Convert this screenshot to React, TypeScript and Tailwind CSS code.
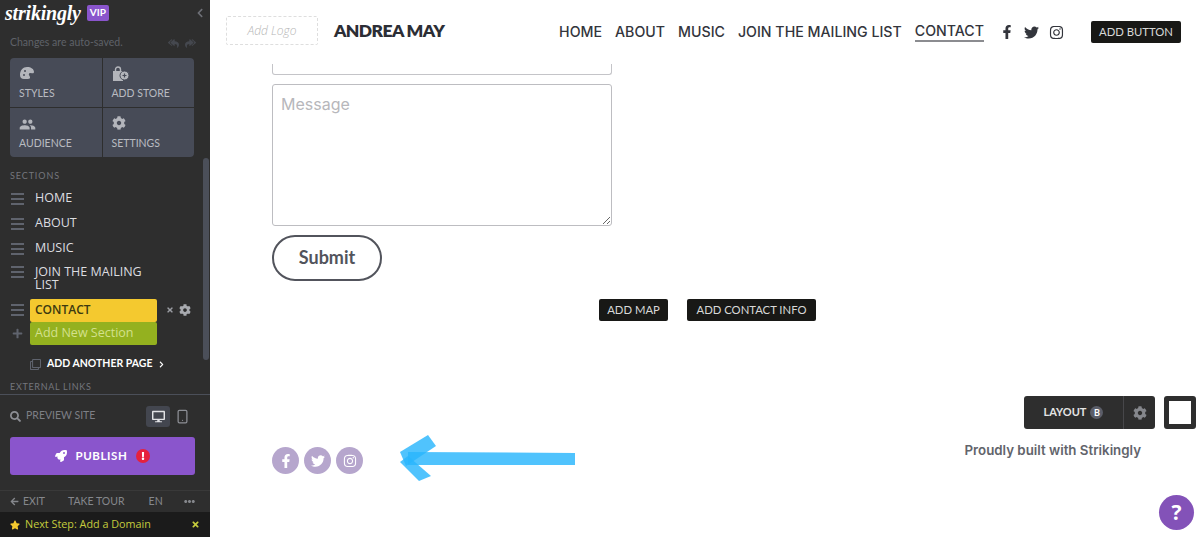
import React from "react";
import { FaFacebookF, FaTwitter, FaInstagram, FaCog, FaSearch, FaRocket, FaStar, FaArrowLeft, FaReplyAll, FaRegClone, FaChevronRight, FaChevronLeft, FaExclamation, FaEllipsisH, FaPlus, FaDesktop, FaTimes } from "react-icons/fa";
import { MdPeople } from "react-icons/md";
import { Smartphone } from "lucide-react";

const lato = "font-['Lato','Liberation_Sans',sans-serif]";
const open = "font-['Open_Sans','Liberation_Sans',sans-serif]";
const inter = "font-['Inter','Liberation_Sans',sans-serif]";

function Burger() {
  return (
    <span className="flex w-[13px] shrink-0 flex-col gap-[3px]">
      <span className="h-[2px] bg-[#5f636d]" />
      <span className="h-[2px] bg-[#5f636d]" />
      <span className="h-[2px] bg-[#5f636d]" />
    </span>
  );
}

function Row({ label }: { label: string }) {
  return (
    <div className="flex h-[25px] items-center gap-[11px] pl-[11px]">
      <Burger />
      <span className={`${open} text-[12.5px] text-[#dcdde0]`}>{label}</span>
    </div>
  );
}

function PaletteIcon() {
  return (
    <svg width="16" height="14" viewBox="0 0 16 14" fill="currentColor" aria-hidden="true">
      <path d="M1 9C1 4 4 1 8 1c4 0 7 2 7 5 0 1-1 1.500-2 1.200L11 7c-1 0-1.500 1-1 2l1 2c.4 1-.5 2-2 2H5C2.500 13 1 11.500 1 9z" />
      <circle cx="5" cy="9" r="1" fill="#474b57" />
      <circle cx="6" cy="5" r="1" fill="#474b57" />
    </svg>
  );
}

function StoreIcon() {
  return (
    <svg width="17" height="16" viewBox="0 0 17 16" fill="currentColor" aria-hidden="true">
      <path d="M1 5h10v10H1z" />
      <path d="M3.500 6V3.500a2.500 2.500 0 0 1 5 0V6" fill="none" stroke="currentColor" strokeWidth="1.400" />
      <circle cx="12.500" cy="9.500" r="4.500" stroke="#474b57" strokeWidth="1" />
      <path d="M12.500 7.500v4M10.500 9.500h4" stroke="#474b57" strokeWidth="1.200" />
    </svg>
  );
}

function Tile({ icon, label }: { icon: React.ReactNode; label: string }) {
  return (
    <div className="flex h-[49px] flex-col justify-between bg-[#474b57] pb-[7px] pl-[9px] pt-[8px]">
      <span className="text-[#b3b5bb]">{icon}</span>
      <span className={`${lato} text-[10.5px] leading-[13px] text-[#b9bbc1]`}>{label}</span>
    </div>
  );
}

function Sidebar() {
  return (
    <aside className="relative flex h-[537px] w-[210px] shrink-0 flex-col overflow-hidden bg-[#2e2e2e]">
      <div className="absolute right-[1px] top-[158px] h-[202px] w-[6px] rounded-sm bg-[#4b4f59]" />
      <div className="flex h-[25px] items-center pl-[5px] pr-[5px]">
        <span className="text-[20px] font-bold italic leading-none tracking-[-0.2px] text-white font-['Liberation_Serif',serif]">strikingly</span>
        <span className={`${lato} ml-[6px] flex h-[16px] w-[22px] items-center justify-center rounded-[2px] bg-[#8a55cc] text-[10px] font-bold text-white`}>VIP</span>
        <FaChevronLeft className="ml-auto text-[10px] text-[#6e7077]" />
      </div>
      <div className="mt-[11px] flex h-[14px] items-center pl-[10px] pr-[14px]">
        <span className={`${lato} text-[10.5px] text-[#5f6269]`}>Changes are auto-saved.</span>
        <FaReplyAll className="ml-auto text-[11px] text-[#45484f]" />
        <FaReplyAll className="ml-[6px] -scale-x-100 text-[11px] text-[#45484f]" />
      </div>
      <div className="mx-[10px] mt-[8px] grid h-[99px] w-[184px] grid-cols-2 gap-[1px] overflow-hidden rounded-[4px] bg-[#2e2e2e]">
        <Tile label="STYLES" icon={<PaletteIcon />} />
        <Tile label="ADD STORE" icon={<StoreIcon />} />
        <Tile label="AUDIENCE" icon={<MdPeople className="text-[17px]" />} />
        <Tile label="SETTINGS" icon={<FaCog className="text-[14px]" />} />
      </div>
      <div className={`${lato} mt-[13px] pl-[10px] text-[9px] leading-[12px] tracking-[0.9px] text-[#74767d]`}>SECTIONS</div>
      <div className="mt-[4px]">
        <Row label="HOME" />
        <Row label="ABOUT" />
        <Row label="MUSIC" />
        <div className="flex h-[35px] items-start gap-[11px] pl-[11px] pt-[4px]">
          <span className="pt-[1px]"><Burger /></span>
          <span className={`${open} w-[130px] text-[12.5px] leading-[13px] text-[#dcdde0]`}>JOIN THE MAILING LIST</span>
        </div>
      </div>
      <div className="mt-[2px] flex h-[24px] items-center pl-[11px]">
        <Burger />
        <div className={`${open} ml-[6px] flex h-[23px] w-[127px] items-center rounded-[2px] bg-[#f4c92f] pl-[5px] text-[12px] font-semibold text-[#3c3a10]`}>CONTACT</div>
        <FaTimes className="ml-[9px] text-[8px] text-[#9a9ca2]" />
        <FaCog className="ml-[5px] text-[12px] text-[#a8aaaf]" />
      </div>
      <div className="flex h-[23px] items-center pl-[11px]">
        <FaPlus className="w-[13px] text-[11px] text-[#5f636d]" />
        <div className={`${open} ml-[6px] flex h-[23px] w-[127px] items-center rounded-[2px] bg-[#94b11f] pl-[5px] text-[12.5px] text-[#d3e08d]`}>Add New Section</div>
      </div>
      <div className="mt-[10px] flex h-[18px] items-center pl-[30px]">
        <FaRegClone className="text-[11px] text-[#5f636d]" />
        <span className={`${lato} ml-[6px] text-[10.5px] font-bold text-white`}>ADD ANOTHER PAGE</span>
        <FaChevronRight className="ml-[5px] text-[7px] text-white" />
      </div>
      <div className={`${lato} mt-[8px] pl-[10px] text-[9px] leading-[12px] tracking-[0.7px] text-[#74767d]`}>EXTERNAL LINKS</div>
      <div className="mt-[1px] h-[1px] bg-[#4b4f59]" />
      <div className="mt-[9px] flex h-[24px] items-center pl-[10px]">
        <FaSearch className="text-[11px] text-[#8d8f95]" />
        <span className={`${lato} ml-[5px] w-[68px] whitespace-nowrap text-[10.5px] text-[#7d7f85]`}>PREVIEW SITE</span>
        <span className="ml-[52px] flex h-[21px] w-[24px] items-center justify-center rounded-[3px] bg-[#43464f]"><FaDesktop className="text-[13px] text-[#e2e3e6]" /></span>
        <Smartphone className="ml-[5px] h-[15px] w-[15px] text-[#8d8f95]" />
      </div>
      <div className="mx-[10px] mt-[9px] flex h-[38px] w-[185px] shrink-0 items-center justify-center rounded-[3px] bg-[#8a55cc]">
        <FaRocket className="text-[12px] text-white" />
        <span className={`${lato} ml-[9px] text-[11.5px] font-bold tracking-[0.6px] text-white`}>PUBLISH</span>
        <span className="ml-[9px] flex h-[14px] w-[14px] items-center justify-center rounded-full bg-[#e5213d]"><FaExclamation className="text-[8px] text-white" /></span>
      </div>
      <div className="mt-[15px] h-[1px] shrink-0 bg-[#393939]" />
      <div className={`${lato} flex h-[21px] shrink-0 items-center pl-[10px] pr-[15px] text-[10.5px] text-[#85878c]`}>
        <FaArrowLeft className="text-[9px]" />
        <span className="ml-[4px]">EXIT</span>
        <span className="ml-[23px]">TAKE TOUR</span>
        <span className="ml-[24px]">EN</span>
        <FaEllipsisH className="ml-auto text-[11px]" />
      </div>
      <div className="flex h-[25px] shrink-0 items-center bg-[#1b1b1b] pl-[10px] pr-[10px]">
        <FaStar className="text-[10px] text-[#f4c92f]" />
        <span className={`${open} ml-[5px] text-[10.800px] text-[#c5cc3d]`}>Next Step: Add a Domain</span>
        <FaTimes className="ml-auto text-[9px] text-[#c5cc3d]" />
      </div>
    </aside>
  );
}

function Social({ children }: { children: React.ReactNode }) {
  return <span className="flex h-[27px] w-[27px] items-center justify-center rounded-full bg-[#b6a6cd] text-[14px] text-white">{children}</span>;
}

function DarkBtn({ label, cls }: { label: string; cls: string }) {
  return <span className={`${lato} flex h-[22px] items-center justify-center rounded-[2px] bg-[#181816] text-[11.300px] text-[#d8d8d8] ${cls}`}>{label}</span>;
}

function Main() {
  return (
    <main className="relative h-[537px] flex-1 overflow-hidden bg-white">
      <header className="flex h-[64px] items-center pl-[16px] pr-[19px]">
        <div className={`${open} -mt-[3px] flex h-[29px] w-[92px] items-center justify-center rounded-[2px] border border-dashed border-[#dedede] text-[12px] font-light italic text-[#b5b5b5]`}>Add Logo</div>
        <span className={`${lato} -mt-[1px] ml-[16px] text-[17.500px] font-extrabold tracking-[-0.6px] text-[#2c2e35]`}>ANDREA MAY</span>
        <nav className={`${inter} ml-auto flex items-center gap-[13px] text-[14.200px] font-medium text-[#33353c]`}>
          <span>HOME</span>
          <span>ABOUT</span>
          <span>MUSIC</span>
          <span>JOIN THE MAILING LIST</span>
          <span className="border-b-2 border-[#8b8c90] leading-[19px]">CONTACT</span>
        </nav>
        <div className="ml-[16px] flex items-center gap-[10px] text-[15px] text-[#33353c]">
          <FaFacebookF className="text-[14px]" />
          <FaTwitter />
          <FaInstagram />
        </div>
        <DarkBtn label="ADD BUTTON" cls="ml-[27px] w-[90px]" />
      </header>
      <div className="pl-[62px]">
        <div className="h-[11px] w-[340px] rounded-b-[3px] border-x border-b border-[#c4c4c8]" />
        <textarea readOnly placeholder="Message" className={`${inter} mt-[9px] block h-[142px] w-[340px] rounded-[3px] border border-[#bdbdc1] px-[8px] pb-[8px] pt-[7px] text-[16px] leading-[24px] placeholder:text-[#b7b7bb]`} />
        <div className={`${lato} mt-[9px] flex h-[46px] w-[110px] items-center justify-center rounded-full border-2 border-[#52545c] pb-[1px] text-[18px] font-bold text-[#52545c]`}>Submit</div>
      </div>
      <div className="mt-[18px] flex justify-center gap-[19px] pl-[5px]">
        <DarkBtn label="ADD MAP" cls="w-[69px]" />
        <DarkBtn label="ADD CONTACT INFO" cls="w-[129px]" />
      </div>
      <div className="mt-[75px] flex justify-end gap-[9px] pr-[4px]">
        <div className="flex h-[33px] w-[131px] items-center rounded-[3px] bg-[#2e2e2e]">
          <span className="flex h-full flex-1 items-center justify-center gap-[4px] border-r border-[#47474a]">
            <span className={`${lato} text-[11px] font-bold text-[#e4e4e4]`}>LAYOUT</span>
            <span className={`${lato} flex h-[13px] w-[13px] items-center justify-center rounded-full bg-[#5b5e69] text-[9px] font-bold text-white`}>B</span>
          </span>
          <span className="flex w-[31px] justify-center"><FaCog className="text-[14px] text-[#85878c]" /></span>
        </div>
        <div className="h-[33px] w-[32px] rounded-[3px] border-[5px] border-[#2e2e2e] bg-white" />
      </div>
      <div className="mt-[18px] flex items-start pl-[62px] pr-[59px]">
        <div className="flex gap-[5px]">
          <Social><FaFacebookF /></Social>
          <Social><FaTwitter /></Social>
          <Social><FaInstagram /></Social>
        </div>
        <span className={`${inter} ml-auto mt-[-6px] text-[13.300px] font-semibold text-[#62646b]`}>Proudly built with Strikingly</span>
      </div>
      <svg className="absolute left-[188px] top-[432px]" width="180" height="52" viewBox="0 0 180 52" aria-hidden="true">
        <g fill="#29b6fc" fillOpacity="0.82">
          <polygon points="10,20 177,21 177,33 10,33" />
          <polygon points="2,20 30,3 38,14 8,34" />
          <polygon points="2,30 10,24 33,44 21,49" />
        </g>
      </svg>
      <div className={`${open} absolute bottom-[7px] right-[6px] flex h-[35px] w-[35px] items-center justify-center rounded-full bg-[#8352b8] text-[21px] font-bold text-white`}>?</div>
    </main>
  );
}

export default function App() {
  return (
    <div className="flex h-[537px] w-[1200px] overflow-hidden">
      <Sidebar />
      <Main />
    </div>
  );
}
